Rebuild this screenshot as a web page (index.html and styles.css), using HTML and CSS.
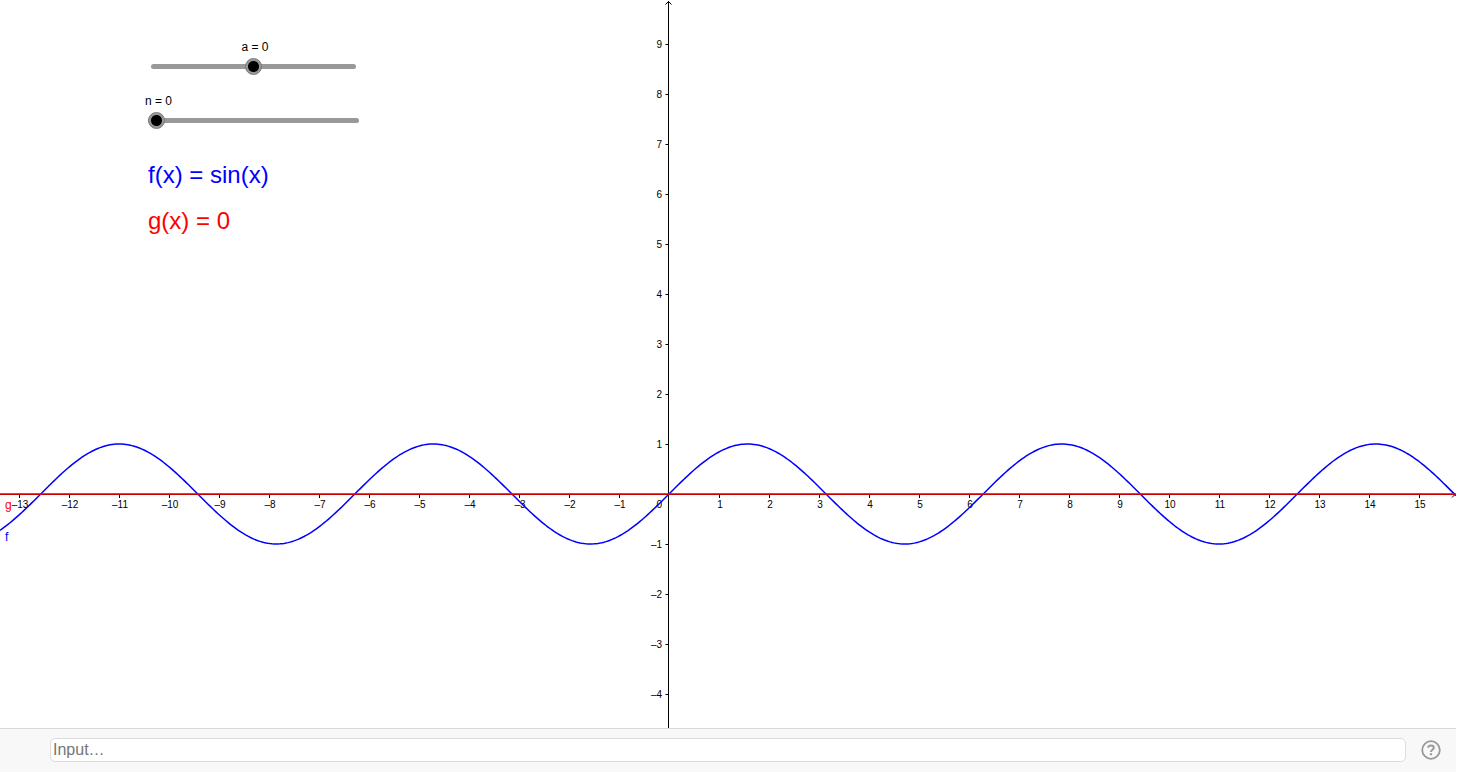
FILE: index.html
```
<!DOCTYPE html>
<html lang="en">
<head>
    <meta charset="UTF-8">
    <meta name="viewport" content="width=device-width, initial-scale=1.0">
    <title>f(x) = sin(x)</title>
    <link rel="stylesheet" href="styles.css">
</head>
<body>
    <main class="graphics">
        <svg id="plot" class="plot" role="img" aria-label="Graph of f and g"></svg>

        <!-- sliders and formulas lie over the plot -->
        <div class="panel">
            <div class="control control-a">
                <label for="slider-a">a = 0</label>
                <input type="range" id="slider-a" min="-5" max="5" value="0">
            </div>
            <div class="control control-n">
                <label for="slider-n">n = 0</label>
                <input type="range" id="slider-n" min="0" max="20" value="0">
            </div>
            <div class="formulas">
                <p class="formula formula-f">f(x) = sin(x)</p>
                <p class="formula formula-g">g(x) = 0</p>
            </div>
        </div>
    </main>

    <footer class="input-bar">
        <input type="text" class="command" placeholder="Input…" aria-label="Input">
        <button type="button" class="help" aria-label="Help">
            <svg width="20" height="20" viewBox="0 0 20 20" fill="none" stroke="#999" stroke-width="2">
                <circle cx="10" cy="10" r="8.8" stroke-width="1.8"/>
                <path d="M7.2 7.8C7.3 6.3 8.4 5.6 10 5.6s2.8.8 2.8 2.2c0 2-2.8 2-2.8 4.2"/>
                <path d="M8.9 13.2h2.2v2H8.9z" fill="#999" stroke="none"/>
            </svg>
        </button>
    </footer>

    <script src="plot.js"></script>
</body>
</html>
```
FILE: styles.css
```
html, body {
    height: 100%;
    margin: 0;
}

body {
    display: flex;
    flex-direction: column;
    box-sizing: border-box;
    padding: 0 2px 1px 0;
    background-color: #fff;
    font-family: "Liberation Sans", Arial, sans-serif;
    overflow: hidden;
}

/* plot */
.graphics {
    position: relative;
    flex: 1;
    min-height: 0;
}

.plot {
    display: block;
    width: 100%;
    height: 100%;
}

.axis {
    fill: none;
    stroke: #000;
    stroke-width: 1;
}

.tick-label {
    font-size: 10px;
    fill: #000;
}

.tick-x {
    text-anchor: middle;
}

.tick-y {
    text-anchor: end;
}

.curve-f {
    fill: none;
    stroke: #00f;
    stroke-width: 1.5;
}

.curve-g {
    stroke: #f00;
    stroke-opacity: 0.8;
    stroke-width: 2;
}

.name {
    font-size: 12px;
}

.name-f {
    fill: #00f;
}

.name-g {
    fill: #f00;
}

/* sliders */
.panel {
    position: absolute;
    top: 40px;
    left: 145px;
    width: 217px;
}

.control {
    display: flex;
    flex-direction: column;
    gap: 4px;
    margin-bottom: 19px;
    font-size: 12px;
    line-height: 14px;
}

.control-a {
    padding: 0 6px;
}

.control-a label {
    padding-left: 3px;
    text-align: center;
}

input[type="range"] {
    -webkit-appearance: none;
    appearance: none;
    height: 17px;
    margin: 0;
    background: none;
    cursor: pointer;
}

.control-n input[type="range"] {
    margin: 0 3px;
}

input[type="range"]::-webkit-slider-runnable-track {
    height: 5px;
    border-radius: 3px;
    background-color: #999;
}

input[type="range"]::-webkit-slider-thumb {
    -webkit-appearance: none;
    box-sizing: border-box;
    width: 17px;
    height: 17px;
    margin-top: -6px;
    border: 1px solid #777;
    border-radius: 50%;
    background: radial-gradient(circle, #000 5px, #999 6px);
}

.formulas {
    display: flex;
    flex-direction: column;
    gap: 18px;
    padding: 13px 3px 0;
}

.formula {
    margin: 0;
    font-size: 24px;
    line-height: 28px;
}

.formula-f {
    color: #00f;
}

.formula-g {
    color: #f00;
}

/* input bar */
.input-bar {
    display: flex;
    align-items: center;
    gap: 15px;
    padding: 9px 15px 10px 50px;
    border-top: 1px solid #d8d8d8;
    background-color: #f8f8f8;
}

.command {
    flex: 1;
    box-sizing: border-box;
    height: 24px;
    padding: 0 2px;
    border: 1px solid #dcdcdc;
    border-radius: 5px;
    background-color: #fff;
    font-family: inherit;
    font-size: 16px;
}

.command::placeholder {
    color: #757575;
}

.help {
    display: flex;
    padding: 0;
    border: none;
    background: none;
    cursor: pointer;
}
```
FILE: plot.js
```
const plot = document.getElementById('plot');
const unit = 50;
const originX = 669;
const originY = 494;

function add(tag, attrs, text) {
    const el = document.createElementNS('http://www.w3.org/2000/svg', tag);
    for (const key in attrs) {
        el.setAttribute(key, attrs[key]);
    }
    if (text !== undefined) {
        el.textContent = text;
    }
    plot.appendChild(el);
}

function label(n) {
    return n < 0 ? '–' + Math.abs(n) : String(n);
}

function draw() {
    const w = plot.clientWidth;
    const h = plot.clientHeight;
    const axisX = originX - 0.5;
    const axisY = originY + 0.5;
    plot.innerHTML = '';

    // axes with arrow heads
    add('path', { class: 'axis', d: `M${axisX} ${h}V1M${axisX - 3} 4.5L${axisX} 1.5L${axisX + 3} 4.5` });
    add('path', { class: 'axis', d: `M0 ${axisY}H${w}M${w - 4} ${axisY - 3}L${w - 1} ${axisY}L${w - 4} ${axisY + 3}` });

    // x ticks
    for (let n = Math.ceil(-originX / unit); originX + n * unit < w - 10; n++) {
        const x = originX + n * unit;
        if (n !== 0) {
            add('path', { class: 'axis', d: `M${x + 0.5} ${originY}v4` });
            add('text', { class: 'tick-label tick-x', x: x + 1, y: originY + 14 }, label(n));
        }
    }

    // y ticks
    for (let n = Math.ceil((originY - h) / unit); originY - n * unit > 10; n++) {
        const y = originY - n * unit;
        if (n !== 0) {
            add('path', { class: 'axis', d: `M${axisX - 3} ${y + 0.5}h3` });
            add('text', { class: 'tick-label tick-y', x: originX - 7, y: y + 4 }, label(n));
        }
    }
    add('text', { class: 'tick-label tick-y', x: originX - 7, y: originY + 14 }, '0');

    // f(x) = sin(x)
    const points = [];
    for (let x = 0; x <= w; x += 2) {
        points.push(x + ',' + (originY - unit * Math.sin((x - originX) / unit)).toFixed(2));
    }
    add('polyline', { class: 'curve-f', points: points.join(' ') });

    // g(x) = 0
    add('line', { class: 'curve-g', x1: 0, y1: originY, x2: w, y2: originY });

    add('text', { class: 'name name-g', x: 5, y: originY + 15 }, 'g');
    add('text', { class: 'name name-f', x: 5, y: originY + 47 }, 'f');
}

draw();
window.addEventListener('resize', draw);
```
